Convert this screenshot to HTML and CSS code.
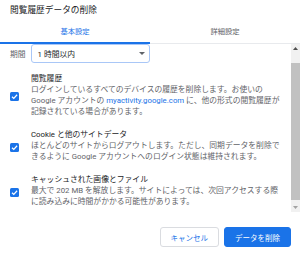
FILE: index.html
```html
<!DOCTYPE html>
<html lang="ja">
<head>
  <meta charset="UTF-8" />
  <title>閲覧履歴データの削除</title>
  <link rel="stylesheet" href="styles.css">
</head>
<body>
  <div class="dialog">
    <h1 class="title">閲覧履歴データの削除</h1>

    <!-- Tabs -->
    <div class="tabs">
      <div class="tab active">基本設定</div>
      <div class="tab">詳細設定</div>
    </div>

    <!-- Scrolling body -->
    <div class="body">
      <div class="content">
        <div class="period">
          <span class="period-label">期間</span>
          <div class="select">
            <span>1 時間以内</span>
            <svg class="select-arrow" width="6" height="3" viewBox="0 0 6 3"><polygon points="0,0 6,0 3,3" fill="#5f6368"/></svg>
          </div>
        </div>

        <div class="options">
          <div class="option">
            <span class="check"><svg width="9" height="9" viewBox="0 0 10 10"><path d="M2.2 5.2 L4.2 7.1 L7.9 3.1" fill="none" stroke="#fff" stroke-width="1.4"/></svg></span>
            <div class="option-text">
              <div class="option-title">閲覧履歴</div>
              <div class="option-desc">ログインしているすべてのデバイスの履歴を削除します。お使いの<br>Google アカウントの <span class="link">myactivity.google.com</span> に、他の形式の閲覧履歴が<br>記録されている場合があります。</div>
            </div>
          </div>

          <div class="option">
            <span class="check"><svg width="9" height="9" viewBox="0 0 10 10"><path d="M2.2 5.2 L4.2 7.1 L7.9 3.1" fill="none" stroke="#fff" stroke-width="1.4"/></svg></span>
            <div class="option-text">
              <div class="option-title">Cookie と他のサイトデータ</div>
              <div class="option-desc">ほとんどのサイトからログアウトします。ただし、同期データを削除で<br>きるように Google アカウントへのログイン状態は維持されます。</div>
            </div>
          </div>

          <div class="option">
            <span class="check"><svg width="9" height="9" viewBox="0 0 10 10"><path d="M2.2 5.2 L4.2 7.1 L7.9 3.1" fill="none" stroke="#fff" stroke-width="1.4"/></svg></span>
            <div class="option-text">
              <div class="option-title">キャッシュされた画像とファイル</div>
              <div class="option-desc">最大で 202 MB を解放します。サイトによっては、次回アクセスする際<br>に読み込みに時間がかかる可能性があります。</div>
            </div>
          </div>
        </div>
      </div>

      <div class="scrollbar">
        <div class="sb-btn"><svg width="5" height="3" viewBox="0 0 5 3"><polygon points="0,3 5,3 2.5,0" fill="#505050"/></svg></div>
        <div class="sb-track"><div class="sb-thumb"></div></div>
        <div class="sb-btn"><svg width="5" height="3" viewBox="0 0 5 3"><polygon points="0,0 5,0 2.5,3" fill="#a3a3a3"/></svg></div>
      </div>
    </div>

    <div class="actions">
      <button class="btn btn-cancel">キャンセル</button>
      <button class="btn btn-primary">データを削除</button>
    </div>
  </div>
</body>
</html>
```

FILE: styles.css
```css
body {
  margin: 0;
  background-color: #fff;
  font-family: Roboto, "Noto Sans CJK JP", sans-serif;
  color: #202124;
}

.dialog {
  width: 300px;
  height: 254px;
  display: flex;
  flex-direction: column;
}

.title {
  margin: 0;
  padding: 4px 10px 0;
  font-size: 8.7px;
  font-weight: normal;
  line-height: 12px;
  color: #202124;
}

.tabs {
  display: flex;
  border-bottom: 1px solid #e8eaed;
}

.tab {
  flex: 1;
  text-align: center;
  padding: 10px 0 5px;
  font-size: 7.3px;
  line-height: 11px;
  color: #5f6368;
  border-bottom: 2px solid transparent;
  margin-bottom: -1px;
}

.tab.active {
  color: #1a73e8;
  border-bottom-color: #1a73e8;
}

.body {
  display: flex;
  height: 168px;
}

.content {
  flex: 1;
  overflow: hidden;
}

.period {
  display: flex;
  align-items: center;
  gap: 5px;
  padding-left: 10px;
}

.period-label {
  font-size: 7.8px;
  color: #5f6368;
}

.select {
  box-sizing: border-box;
  width: 119px;
  height: 19px;
  display: flex;
  align-items: center;
  justify-content: space-between;
  padding: 0 4px 0 6px;
  border: 1px solid #a9c7f7;
  border-radius: 3px;
  font-size: 7.8px;
  color: #202124;
}

.options {
  display: flex;
  flex-direction: column;
  gap: 12px;
  margin-top: 10px;
}

.option {
  display: flex;
  align-items: center;
  gap: 12px;
  padding-left: 10px;
}

.check {
  width: 9px;
  height: 9px;
  margin-top: 3px;
  border-radius: 1.5px;
  background-color: #1a73e8;
  display: flex;
  flex-shrink: 0;
}

.option-text {
  font-size: 7.8px;
  line-height: 11px;
  white-space: nowrap;
}

.option-title {
  color: #202124;
}

.option-desc {
  color: #5f6368;
}

.link {
  color: #1a73e8;
}

.scrollbar {
  width: 9px;
  display: flex;
  flex-direction: column;
  background-color: #f1f1f1;
}

.sb-btn {
  height: 9px;
  display: flex;
  align-items: center;
  justify-content: center;
}

.sb-track {
  flex: 1;
  display: flex;
  padding: 10px 0 3px;
}

.sb-thumb {
  flex: 1;
  background-color: #c1c1c1;
}

.actions {
  display: flex;
  justify-content: flex-end;
  gap: 5px;
  padding: 15px 9px 0;
}

.btn {
  height: 20px;
  padding: 0 10px;
  border-radius: 3px;
  font-family: Roboto, "Noto Sans CJK JP", sans-serif;
  font-size: 7.5px;
  cursor: pointer;
}

.btn-cancel {
  background-color: #fff;
  border: 1px solid #dadce0;
  color: #1a73e8;
}

.btn-primary {
  background-color: #1a73e8;
  border: 1px solid #1a73e8;
  color: #fff;
}
```
